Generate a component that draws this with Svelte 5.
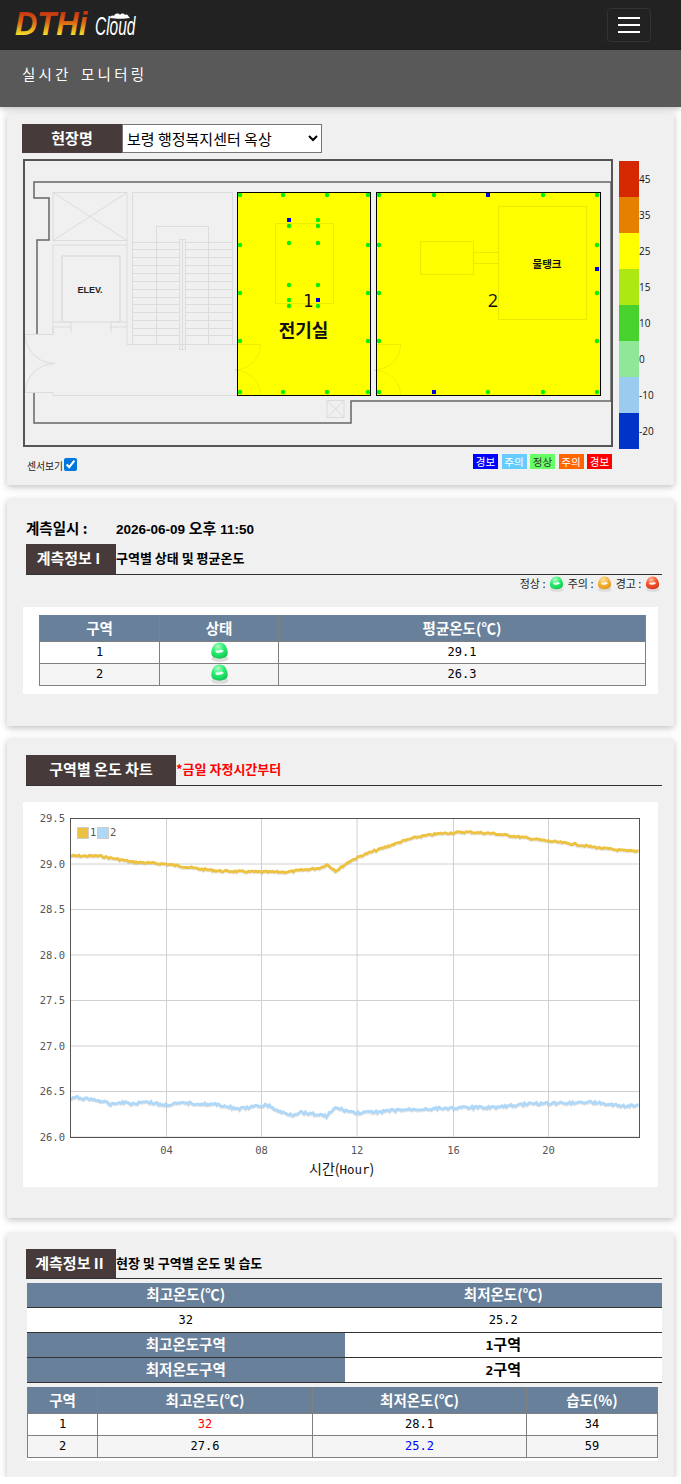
<script>
  // scale bar, top to bottom
  const scale = [
    { color: '#d62800', label: '45' },
    { color: '#e58000', label: '35' },
    { color: '#ffff00', label: '25' },
    { color: '#aee812', label: '15' },
    { color: '#48d22e', label: '10' },
    { color: '#8ee898', label: '0' },
    { color: '#9ccbf0', label: '-10' },
    { color: '#0033c8', label: '-20' }
  ];

  const tags = [
    { text: '경보', bg: '#0000ff', fg: '#fff' },
    { text: '주의', bg: '#66ccff', fg: '#fff' },
    { text: '정상', bg: '#66ff66', fg: '#333' },
    { text: '주의', bg: '#ff6600', fg: '#fff' },
    { text: '경보', bg: '#ff0000', fg: '#fff' }
  ];

  // sensors in page coordinates, the svg viewBox uses the same numbers
  const green = [];
  const blue = [[289, 220], [318, 300], [488, 195], [434, 392], [597, 269]];
  for (const x of [240, 283, 327, 368]) green.push([x, 195], [x, 392]);
  for (const x of [240, 368, 379, 597]) for (const y of [245, 293, 341]) green.push([x, y]);
  for (const x of [379, 434, 543, 597]) green.push([x, 195]);
  for (const x of [379, 488, 543, 597]) green.push([x, 392]);
  for (const x of [289, 318]) for (const y of [226, 243, 285, 306]) green.push([x, y]);
  green.push([318, 220], [289, 300]);

  const stairLines = [242, 249, 257, 265, 273, 281, 289, 297, 304, 312, 320, 328, 335];

  // chart curves, key points as [x, y] read off the plot
  const keys1 = [[70, 856], [100, 856], [133, 862], [166, 864], [200, 869], [220, 871], [261, 872], [287, 872], [303, 870], [320, 868], [327, 864.5], [336, 871], [350, 861], [363, 855], [383, 848], [400, 842], [417, 837], [440, 833.5], [467, 832], [493, 833.5], [520, 837], [548, 841], [573, 844], [600, 848], [627, 851], [639, 851]];
  const keys2 = [[70, 1099], [77, 1097.5], [97, 1100], [110, 1104], [123, 1102], [135, 1104], [143, 1101], [163, 1105], [187, 1103], [220, 1105], [238, 1109], [267, 1105], [280, 1112], [293, 1115], [300, 1112], [327, 1116], [335, 1108], [357, 1113], [375, 1112], [400, 1110], [450, 1108], [500, 1107], [525, 1104], [560, 1103], [590, 1102], [620, 1106], [639, 1106]];

  function curve(keys, jitter, seed) {
    let s = seed;
    let out = '';
    let k = 0;
    for (let x = 70; x <= 639.5; x += 1.5) {
      while (k < keys.length - 2 && x > keys[k + 1][0]) k++;
      const [x0, y0] = keys[k];
      const [x1, y1] = keys[k + 1];
      s = (s * 9301 + 49297) % 233280;
      const y = y0 + ((x - x0) / (x1 - x0)) * (y1 - y0) + (s / 233280 - 0.5) * jitter;
      out += x.toFixed(1) + ',' + y.toFixed(1) + ' ';
    }
    return out;
  }

  const line1 = curve(keys1, 1.8, 7);
  const line2 = curve(keys2, 2.6, 31);

  const yTicks = [
    { y: 818.5, t: '29.5' }, { y: 864, t: '29.0' }, { y: 909.5, t: '28.5' }, { y: 955, t: '28.0' },
    { y: 1000.5, t: '27.5' }, { y: 1046, t: '27.0' }, { y: 1091.5, t: '26.5' }, { y: 1137, t: '26.0' }
  ];
  const xTicks = [
    { x: 166.5, t: '04' }, { x: 261.5, t: '08' }, { x: 357, t: '12' }, { x: 453.5, t: '16' }, { x: 548.5, t: '20' }
  ];

  const bulbs = {
    green: ['#b4fcc8', '#2cf072', '#12c452'],
    orange: ['#fde4a4', '#f6b63e', '#e09618'],
    red: ['#ffc0a0', '#f65a30', '#d8301c']
  };
</script>

{#snippet bulb(kind, w, h)}
  <svg class="bulb" width={w} height={h} viewBox="0 0 19 21">
    <defs>
      <radialGradient id="bulb-{kind}" cx="0.4" cy="0.25" r="0.8">
        <stop offset="0" stop-color={bulbs[kind][0]} />
        <stop offset="0.45" stop-color={bulbs[kind][1]} />
        <stop offset="1" stop-color={bulbs[kind][2]} />
      </radialGradient>
    </defs>
    <ellipse cx="10" cy="17.6" rx="9" ry="3.2" fill="#dcdcdc" />
    <path d="M9.5 .5C4 .5 1.8 5 1 10 .4 14 1.8 17 9.5 17.5 17.2 17 18.6 14 18 10 17.2 5 15 .5 9.5 .5z" fill="url(#bulb-{kind})" />
    <path d="M5 9.4c1.8-1.9 2.9.4 4.4-.9s3.1-.6 4.5.7c-.4 2.1-2.7 1.7-4.2 2.2S5.8 11.7 5 9.4z" fill="#fff" opacity="0.9" />
  </svg>
{/snippet}

<nav class="navbar">
  <svg class="logo" width="130" height="40" viewBox="0 0 130 40">
    <defs>
      <linearGradient id="fire" gradientUnits="userSpaceOnUse" x1="0" y1="-23" x2="0" y2="1">
        <stop offset="0" stop-color="#c0300f" />
        <stop offset="0.45" stop-color="#dc6616" />
        <stop offset="1" stop-color="#f6ea2a" />
      </linearGradient>
    </defs>
    <text x="0" y="0" class="logo-main" transform="translate(0 30) scale(1 1.05)" fill="url(#fire)">DTHi</text>
    <text x="0" y="0" class="logo-sub" transform="translate(80 30) scale(0.62 1)" fill="#fff">Cloud</text>
    <path d="M95 13c0-2 2-3 4-2 1-3 5-3 6-1 1-2 4-2 5 0 2-1 3 0 4 2l1 1c-6 1-14 1-20 0z" fill="#fff" />
  </svg>
  <button class="toggler" aria-label="메뉴">
    <span></span><span></span><span></span>
  </button>
</nav>

<header class="subhead">실시간 모니터링</header>

<main>
  <section class="card card-map">
    <div class="site-row">
      <div class="site-label">현장명</div>
      <select class="site-select">
        <option>보령 행정복지센터 옥상</option>
      </select>
    </div>
    <div class="map-row">
      <div class="map-col">
        <div class="map-box">
          <svg width="586" height="284" viewBox="25 161 586 284">
            <!-- zones -->
            <rect x="237.5" y="192.5" width="133" height="203" fill="#ffff00" stroke="#000" />
            <rect x="376.5" y="192.5" width="224" height="203" fill="#ffff00" stroke="#000" />
            <!-- outer wall -->
            <path d="M37 334V240H49V198H34V182H611V401H351V423H34V392" fill="none" stroke="#666" stroke-width="1.5" />
            <g fill="none" stroke="#dcdcdc" stroke-width="1">
              <!-- lift shaft -->
              <rect x="53" y="192.5" width="74" height="48" />
              <path d="M53 192.5L127 240.5M127 192.5L53 240.5" />
              <path d="M53 335V245H127M53 322H62V256H120V322H127" />
              <rect x="62" y="256" width="58" height="66" />
              <path d="M62 322h9v10M120 322h-9v10M53 327h18M127 327h-18" />
              <!-- stairs -->
              <rect x="132.5" y="192.5" width="100" height="152" />
              <path d="M127 240.5V344.5H237" />
              <rect x="156.5" y="226.5" width="52" height="118" />
              <rect x="179.5" y="239.5" width="6" height="110" />
              <path d="M182.5 239.5V349.5" />
              {#each stairLines as y}
                <path d="M132.5 {y}.5H179.5M185.5 {y}.5H232.5" />
              {/each}
              <!-- doors -->
              <path d="M25 334.5H53V327M25 334.5C26 351 38 363 55 363.5C38 364 26 376 25 392.5H53V395.5H237" />
              <!-- duct -->
              <rect x="327" y="400.5" width="17" height="17" />
              <path d="M327 400.5L344 417.5M344 400.5L327 417.5" />
            </g>
            <g fill="none" stroke="#000" stroke-opacity="0.07" stroke-width="1">
              <rect x="275.5" y="223.5" width="58" height="80" />
              <path d="M237 344.5H260.5C260.5 358 250 369 235 370C250 371 260.5 382 260.5 395M376 344.5H400.5C400.5 358 390 369 374 370C390 371 400.5 382 400.5 395" />
            </g>
            <g fill="none" stroke="#000" stroke-opacity="0.08" stroke-width="1.2">
              <rect x="498.5" y="206.5" width="88" height="113" />
              <rect x="420.5" y="241.5" width="53" height="33" />
              <path d="M473.5 252.5H498.5M473.5 263.5H498.5" />
            </g>
            <!-- sensors -->
            {#each green as [x, y]}
              <circle cx={x} cy={y} r="2.2" fill="#00f000" />
            {/each}
            {#each blue as [x, y]}
              <rect x={x - 2} y={y - 2} width="4" height="4" fill="#0000e0" />
            {/each}
            <text x="90" y="293" class="t-elev" text-anchor="middle">ELEV.</text>
            <text x="303.5" y="337" class="t-room" text-anchor="middle">전기실</text>
            <text x="547" y="268" class="t-tank" text-anchor="middle">물탱크</text>
            <text x="308" y="307" class="t-num1" text-anchor="middle">1</text>
            <text x="493" y="307" class="t-num2" text-anchor="middle">2</text>
          </svg>
        </div>
        <div class="map-foot">
          <label class="sensor-check">센서보기<input type="checkbox" checked /></label>
          <div class="tags">
            {#each tags as tag}
              <span class="tag" style="background:{tag.bg};color:{tag.fg}">{tag.text}</span>
            {/each}
          </div>
        </div>
      </div>
      <div class="scale">
        {#each scale as s}
          <div class="scale-item">
            <div class="swatch" style="background:{s.color}"></div>
            <span>{s.label}</span>
          </div>
        {/each}
      </div>
    </div>
  </section>

  <section class="card card-info">
    <div class="date-row"><b>계측일시 :</b><span>2026-06-09 <em>오후</em> 11:50</span></div>
    <div class="title-row">
      <h2 class="block">계측정보 I</h2>
      <span class="title-note">구역별 상태 및 평균온도</span>
    </div>
    <div class="status-legend">
      <span>정상 :</span>{@render bulb('green', 15, 16)}<span>주의 :</span>{@render bulb('orange', 15, 16)}<span>경고 :</span>{@render bulb('red', 15, 16)}
    </div>
    <div class="white-box">
      <table class="grid grid-a">
        <colgroup><col style="width:120px" /><col style="width:119px" /><col /></colgroup>
        <thead><tr><th>구역</th><th>상태</th><th>평균온도(℃)</th></tr></thead>
        <tbody>
          <tr><td>1</td><td class="bulb-cell">{@render bulb('green', 19, 21)}</td><td>29.1</td></tr>
          <tr><td>2</td><td class="bulb-cell">{@render bulb('green', 19, 21)}</td><td>26.3</td></tr>
        </tbody>
      </table>
    </div>
  </section>

  <section class="card card-chart">
    <div class="title-row">
      <h2 class="block wide">구역별 온도 차트</h2>
      <span class="title-red">*금일 자정시간부터</span>
    </div>
    <div class="chart-box">
      <svg width="635" height="385" viewBox="23 802 635 385">
        <g stroke="#d0d0d0" stroke-width="1">
          {#each yTicks as t}
            <path d="M70 {t.y}H640" />
          {/each}
          {#each xTicks as t}
            <path d="M{t.x} 818V1137" />
          {/each}
        </g>
        <polyline points={line1} transform="translate(0 1)" fill="none" stroke="#000" stroke-opacity="0.1" stroke-width="3" />
        <polyline points={line2} transform="translate(0 1)" fill="none" stroke="#000" stroke-opacity="0.1" stroke-width="3" />
        <polyline points={line1} fill="none" stroke="#edc240" stroke-width="2.8" />
        <polyline points={line2} fill="none" stroke="#afd8f8" stroke-width="2.8" />
        <rect x="70.5" y="818.5" width="569" height="319" fill="none" stroke="#545454" />
        {#each yTicks as t}
          <text x="65" y={t.y + 3.5} class="tick" text-anchor="end">{t.t}</text>
        {/each}
        {#each xTicks as t}
          <text x={t.x} y="1154" class="tick" text-anchor="middle">{t.t}</text>
        {/each}
        <rect x="77.5" y="827.5" width="11" height="11" fill="#edc240" stroke="#ccc" stroke-width="1" />
        <text x="90" y="836" class="tick">1</text>
        <rect x="97.5" y="827.5" width="11" height="11" fill="#afd8f8" stroke="#ccc" stroke-width="1" />
        <text x="110" y="836" class="tick">2</text>
        <text x="309" y="1174" class="axis-name">시간(<tspan class="axis-hour">Hour</tspan>)</text>
      </svg>
    </div>
  </section>

  <section class="card card-summary">
    <div class="title-row">
      <h2 class="block short">계측정보 II</h2>
      <span class="title-note">현장 및 구역별 온도 및 습도</span>
    </div>
    <table class="summary">
      <tbody>
        <tr><th>최고온도(℃)</th><th>최저온도(℃)</th></tr>
        <tr><td class="mono">32</td><td class="mono">25.2</td></tr>
        <tr><th>최고온도구역</th><td class="zone"><span class="mono">1</span>구역</td></tr>
        <tr><th>최저온도구역</th><td class="zone"><span class="mono">2</span>구역</td></tr>
      </tbody>
    </table>
    <div class="white-tail">
      <table class="grid grid-b">
        <colgroup><col style="width:70px" /><col style="width:215px" /><col style="width:214px" /><col /></colgroup>
        <thead><tr><th>구역</th><th>최고온도(℃)</th><th>최저온도(℃)</th><th>습도(%)</th></tr></thead>
        <tbody>
          <tr><td>1</td><td class="hot">32</td><td>28.1</td><td>34</td></tr>
          <tr><td>2</td><td>27.6</td><td class="cold">25.2</td><td>59</td></tr>
        </tbody>
      </table>
    </div>
  </section>
</main>

<style>
  :global(body) {
    background: #fff;
    font-family: 'Noto Sans CJK KR', 'Noto Sans', sans-serif;
  }

  .navbar {
    height: 50px;
    background: #222;
    display: flex;
    align-items: center;
    justify-content: space-between;
    padding: 0 30px 0 15px;
  }
  .logo { display: block; }
  .logo-main {
    font-family: 'Liberation Sans', sans-serif;
    font-weight: 700;
    font-style: italic;
    font-size: 31px;
  }
  .logo-sub {
    font-family: 'Liberation Sans', sans-serif;
    font-style: italic;
    font-size: 25px;
  }
  .toggler {
    width: 44px;
    height: 34px;
    background: transparent;
    border: 1px solid #333;
    border-radius: 4px;
    display: flex;
    flex-direction: column;
    align-items: center;
    justify-content: center;
    gap: 5px;
    padding: 0;
  }
  .toggler span {
    display: block;
    width: 22px;
    height: 2px;
    background: #fff;
  }

  .subhead {
    height: 57px;
    box-sizing: border-box;
    padding: 13px 22px 0;
    background: #595959;
    color: #fff;
    font-size: 14.5px;
    letter-spacing: 3.2px;
    word-spacing: 3px;
    box-shadow: 0 2px 6px rgba(0, 0, 0, 0.25);
    position: relative;
  }

  .card {
    margin: 0 7px;
    background: #f0f0f0;
    border-radius: 2px;
    box-shadow: 0 2px 7px rgba(0, 0, 0, 0.25);
  }
  .card-map {
    margin-top: 6px;
    height: 372px;
    box-sizing: border-box;
    padding: 11px 0 0 15px;
  }
  .card-info {
    margin-top: 14px;
    height: 227px;
    box-sizing: border-box;
    padding: 16px 12px 0 19px;
  }
  .card-chart {
    margin-top: 13px;
    height: 479px;
    box-sizing: border-box;
    padding: 16px 12px 0 19px;
  }
  .card-summary {
    margin-top: 15px;
    height: 244px;
    box-sizing: border-box;
    padding: 16px 12px 0 19px;
  }

  .site-row { display: flex; height: 29px; }
  .site-label {
    width: 100px;
    background: #463a3a;
    color: #fff;
    font-size: 15px;
    font-weight: 700;
    text-align: center;
    line-height: 28px;
  }
  .site-select {
    width: 200px;
    height: 29px;
    box-sizing: border-box;
    border: 1px solid #767676;
    border-radius: 0;
    background: #fff;
    color: #000;
    font-family: inherit;
    font-size: 15px;
    padding: 0;
  }

  .map-row {
    display: flex;
    align-items: flex-start;
    margin: 6px 0 0 1px;
  }
  .map-box {
    width: 590px;
    height: 288px;
    box-sizing: border-box;
    border: 2px solid #555;
  }
  .map-box svg { display: block; }
  .t-elev { font: 700 9px 'Liberation Sans', sans-serif; fill: #222; }
  .t-room { font: 700 18px 'Noto Sans CJK KR', sans-serif; fill: #111; }
  .t-tank { font: 700 10.5px 'Noto Sans CJK KR', sans-serif; fill: #111; }
  .t-num1 { font: 17px 'DejaVu Sans Mono', monospace; fill: #111; }
  .t-num2 { font: 18px 'Open Sans', sans-serif; fill: #111; }

  .map-foot {
    display: flex;
    justify-content: space-between;
    margin-top: 7px;
    padding-left: 4px;
  }
  .sensor-check {
    display: flex;
    align-items: center;
    height: 24px;
    font-size: 9.8px;
    color: #222;
  }
  .sensor-check input {
    width: 13px;
    height: 13px;
    margin: 0 0 3px 1px;
    accent-color: #0075db;
  }
  .tags { display: flex; gap: 3.5px; height: 15px; margin-right: 1px; }
  .tag {
    width: 25px;
    height: 15px;
    font-size: 10.5px;
    line-height: 15px;
    text-align: center;
  }

  .scale { margin: 2px 0 0 6px; }
  .scale-item { display: flex; height: 36px; }
  .swatch { width: 20px; height: 36px; }
  .scale-item span {
    font: 10px 'Open Sans', 'Liberation Sans', sans-serif;
    color: #111;
    padding-top: 11px;
  }

  .date-row {
    display: flex;
    height: 29px;
    box-sizing: border-box;
    padding-bottom: 4px;
    align-items: center;
    color: #000;
  }
  .date-row b { width: 90px; font-size: 14.5px; }
  .date-row span { font-size: 13.5px; font-weight: 700; font-family: 'Liberation Sans', 'Noto Sans CJK KR', sans-serif; }
  .date-row em { font-style: normal; font-size: 15px; font-family: 'Noto Sans CJK KR', sans-serif; }

  .title-row {
    display: flex;
    align-items: center;
    border-bottom: 1px solid #333;
  }
  .block {
    margin: 0;
    width: 90px;
    height: 30px;
    box-sizing: border-box;
    padding-right: 5px;
    background: #463a3a;
    color: #fff;
    font-size: 15px;
    font-weight: 700;
    line-height: 28px;
    text-align: center;
    flex: none;
  }
  .block.wide { width: 150px; padding-right: 0; }
  .block.short { height: 29px; padding-right: 3px; }
  .title-note { font-size: 13px; font-weight: 700; color: #000; padding-bottom: 3px; }
  .title-red { font-size: 13px; font-weight: 700; color: #ff0000; padding-bottom: 3px; }

  .status-legend {
    display: flex;
    justify-content: flex-end;
    align-items: center;
    gap: 3.6px;
    height: 16px;
    margin-top: 1px;
    padding-right: 2px;
    font-size: 11px;
    color: #222;
  }
  .status-legend span { margin-top: -2px; }
  .bulb { display: block; flex: none; }

  .white-box {
    background: #fff;
    margin: 15px 4px 0 -3px;
    height: 87px;
    box-sizing: border-box;
    padding: 8px 12px 0 16px;
  }
  .grid {
    width: 100%;
    border-collapse: collapse;
    table-layout: fixed;
    font-family: 'DejaVu Sans Mono', 'Noto Sans CJK KR', monospace;
  }
  .grid th {
    height: 23px;
    padding: 0 0 2px;
    background: #68809a;
    border: 1px solid #808080;
    border-top-color: #68809a;
    color: #fff;
    font: 700 14.5px 'Noto Sans CJK KR', sans-serif;
  }
  .grid td {
    height: 19px;
    padding: 0 0 2px;
    background: #fff;
    border: 1px solid #808080;
    color: #000;
    text-align: center;
    font-size: 12px;
  }
  .grid tbody tr:nth-child(2) td { background: #f5f5f5; }
  .grid .bulb-cell { padding: 0; height: 21px; }
  .bulb-cell .bulb { margin: -1px auto 0; height: 20px; }
  .hot.hot { color: #ff0000; }
  .cold.cold { color: #0000ff; }

  .chart-box {
    background: #fff;
    margin: 16px 4px 0 -3px;
    height: 385px;
  }
  .chart-box svg { display: block; }
  .tick { font: 10.5px 'DejaVu Sans Mono', monospace; fill: #555; }
  .axis-name { font: 14px 'Noto Sans CJK KR', sans-serif; fill: #111; }
  .axis-hour { font: 12.5px 'DejaVu Sans Mono', monospace; }

  .summary {
    width: 635px;
    margin: 4px 0 0 1px;
    border-collapse: collapse;
    table-layout: fixed;
  }
  .summary th {
    height: 21px;
    padding: 0 0 3px;
    background: #68809a;
    border-bottom: 1px solid #333;
    color: #fff;
    font-size: 14.5px;
    line-height: 20px;
    font-weight: 700;
  }
  .summary td {
    height: 24px;
    padding: 0;
    background: #fff;
    border-bottom: 1px solid #333;
    text-align: center;
    color: #000;
    font-size: 12px;
  }
  .summary .zone { height: 21px; padding-bottom: 3px; font-size: 15px; line-height: 20px; font-weight: 700; }
  .mono { font-family: 'DejaVu Sans Mono', monospace; font-size: 12px; font-weight: 400; }
  .zone .mono { font-size: 13px; line-height: 16px; font-weight: 700; }

  .white-tail {
    background: #fff;
    width: 631px;
    height: 74px;
    margin: 4px 0 0 1px;
  }
</style>
